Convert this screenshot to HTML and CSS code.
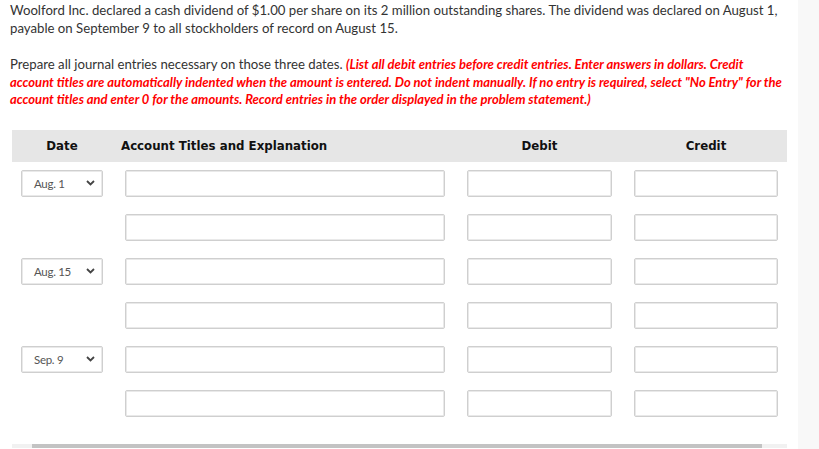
FILE: index.html
```html
<!DOCTYPE html>
<html lang="en">
<head>
  <meta charset="UTF-8">
  <meta name="viewport" content="width=device-width, initial-scale=1.0">
  <title>Journal Entries</title>
  <link rel="stylesheet" href="styles.css">
</head>
<body>
  <main>
    <div class="question">
      <p class="text">Woolford Inc. declared a cash dividend of $1.00 per share on its 2 million outstanding shares. The dividend was declared on August 1, payable on September 9 to all stockholders of record on August 15.</p>
      <p class="text">Prepare all journal entries necessary on those three dates. <span class="note">(List all debit entries before credit entries. Enter answers in dollars. Credit account titles are automatically indented when the amount is entered. Do not indent manually. If no entry is required, select "No Entry" for the account titles and enter 0 for the amounts. Record entries in the order displayed in the problem statement.)</span></p>
    </div>
    <div class="journal">
      <div class="head">
        <div class="col-date">Date</div>
        <div class="col-account">Account Titles and Explanation</div>
        <div class="col-debit">Debit</div>
        <div class="col-credit">Credit</div>
      </div>
      <div class="rows">
        <div class="row">
          <div class="select"><span>Aug. 1</span><svg width="9" height="6" viewBox="0 0 9 6"><polyline points="1,1 4.5,4.5 8,1" fill="none" stroke="#444" stroke-width="1.8"/></svg></div>
          <div class="field account"></div>
          <div class="field"></div>
          <div class="field"></div>
        </div>
        <div class="row">
          <div></div>
          <div class="field account"></div>
          <div class="field"></div>
          <div class="field"></div>
        </div>
        <div class="row">
          <div class="select"><span>Aug. 15</span><svg width="9" height="6" viewBox="0 0 9 6"><polyline points="1,1 4.5,4.5 8,1" fill="none" stroke="#444" stroke-width="1.8"/></svg></div>
          <div class="field account"></div>
          <div class="field"></div>
          <div class="field"></div>
        </div>
        <div class="row">
          <div></div>
          <div class="field account"></div>
          <div class="field"></div>
          <div class="field"></div>
        </div>
        <div class="row">
          <div class="select"><span>Sep. 9</span><svg width="9" height="6" viewBox="0 0 9 6"><polyline points="1,1 4.5,4.5 8,1" fill="none" stroke="#444" stroke-width="1.8"/></svg></div>
          <div class="field account"></div>
          <div class="field"></div>
          <div class="field"></div>
        </div>
        <div class="row">
          <div></div>
          <div class="field account"></div>
          <div class="field"></div>
          <div class="field"></div>
        </div>
      </div>
      <div class="scrollbar"><div class="thumb"></div></div>
    </div>
  </main>
  <div class="side"></div>
</body>
</html>
```

FILE: styles.css
```css
html, body { height: 100%; }

body {
  margin: 0;
  display: flex;
  background-color: #fff;
  font-family: Lato, "Open Sans", sans-serif;
  color: #333;
  overflow: hidden;
}

main {
  width: 798px;
  flex: none;
}

.side {
  flex: 1;
  background-color: #f8f8f8;
}

.question {
  padding: 2px 0 0 10px;
  width: 772px;
}

.text {
  font-size: 13.2px;
  line-height: 17.5px;
  margin: 0 0 19px;
}

.text:last-child { margin-bottom: 21px; }

.note {
  color: #f00;
  font-weight: bold;
  font-style: italic;
  font-size: 13px;
}

.journal {
  margin-left: 12px;
  width: 775px;
}

.head, .row {
  display: grid;
  grid-template-columns: 82px 320px 145px 144px;
  column-gap: 22px;
  padding: 0 8px 0 9px;
}

.head {
  height: 32px;
  align-items: center;
  background-color: #e6e6e6;
  font-family: "DejaVu Sans", Verdana, sans-serif;
  font-weight: bold;
  font-size: 11.8px;
  color: #111;
}

.col-date, .col-debit, .col-credit { text-align: center; }

.col-account { margin-left: -4px; }

.rows {
  padding-top: 8px;
  display: flex;
  flex-direction: column;
  gap: 17px;
}

.row { height: 27px; }

.field, .select {
  box-sizing: border-box;
  height: 27px;
  border: 1px solid #cfcfcf;
  border-radius: 2px;
  box-shadow: inset 0 0 0 1px #e9e9e9;
  background-color: #fff;
}

.select {
  display: flex;
  align-items: center;
  justify-content: space-between;
  padding: 0 7px 0 12px;
  font-size: 11.5px;
  color: #555;
  letter-spacing: -0.3px;
}

.scrollbar {
  margin-top: 27px;
  height: 4px;
  background-color: #f1f1f1;
  padding-left: 20px;
  padding-right: 25px;
}

.thumb {
  height: 4px;
  background-color: #c3c3c3;
}
```
